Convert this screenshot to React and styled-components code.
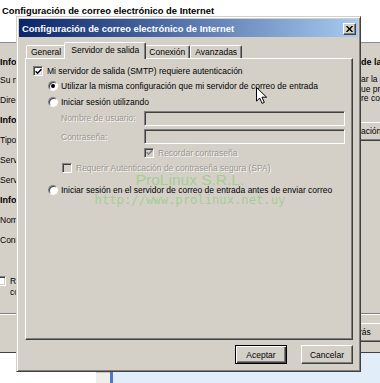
import React from 'react';
import styled, { createGlobalStyle, css } from 'styled-components';

const GlobalStyle = createGlobalStyle`
  html, body { margin: 0; padding: 0; background: #ffffff; }
  body {
    font-family: "Liberation Sans", Arial, sans-serif;
    font-size: 8.5px;
    color: #000;
  }
  * { box-sizing: border-box; }
`;

const Desktop = styled.div`
  position: relative;
  width: 380px;
  height: 383px;
  overflow: hidden;
  background: #fff;
`;

const MailPane = styled.div`
  position: absolute;
  left: 96px;
  top: 353px;
  right: 0;
  bottom: 0;
  display: flex;
`;
const PaneGutter = styled.div`
  width: 14px;
  margin-top: 19px;
  background: #efeee9;
  border-top: 1px solid #c9c7c0;
`;
const PaneBar = styled.div`
  width: 3px;
  background: #4f79c2;
`;
const PaneBody = styled.div`
  flex: 1;
  background: #e2edfa;
`;

const Wizard = styled.div`
  position: absolute;
  left: -3px;
  top: 0;
  width: 424px;
  height: 353px;
  display: flex;
  flex-direction: column;
`;
const WizardHeader = styled.div`
  height: 42px;
  background: #fff;
  padding: 5px 0 0 5px;
  font-size: 9.4px;
  font-weight: bold;
  line-height: 11px;
  white-space: nowrap;
`;
const WizardBody = styled.div`
  flex: 1;
  display: flex;
  flex-direction: column;
  background: #d4d0c8;
  border-top: 1px solid #8f8d88;
`;
const WizardMain = styled.div`
  flex: 1;
  display: flex;
`;
const LeftCol = styled.div`
  width: 364px;
  flex: none;
  padding: 11px 0 0 3px;
  display: flex;
  flex-direction: column;
  overflow: hidden;
`;
const FieldLabel = styled.div`
  height: ${p => p.$h ?? 20}px;
  line-height: ${p => p.$h ?? 20}px;
  font-size: ${p => (p.$bold ? '9px' : '8.5px')};
  font-weight: ${p => (p.$bold ? 'bold' : 'normal')};
  white-space: nowrap;
`;
const SideCheckRow = styled.div`
  display: flex;
  align-items: flex-start;
  gap: 4px;
  margin: 26px 0 0 -4px;
`;
const SideCheckText = styled.div`
  line-height: 11px;
  margin-top: -0.5px;
  white-space: nowrap;
`;
const RightCol = styled.div`
  flex: 1;
  padding-top: 13px;
  display: flex;
  flex-direction: column;
  white-space: nowrap;
  overflow: hidden;
`;
const SideHeading = styled.div`
  height: 12px;
  line-height: 12px;
  font-size: 9px;
  font-weight: bold;
`;
const SidePara = styled.div`
  margin-top: 7px;
  line-height: 9.5px;
`;
const SideButton = styled.div`
  margin-top: 18.5px;
  height: 19px;
  line-height: 17px;
  border-top: 1px solid #fff;
  border-bottom: 1px solid #404040;
  box-shadow: inset 0 -1px 0 #808080;
`;
const WizardFooter = styled.div`
  height: 40px;
  flex: none;
  display: flex;
  align-items: flex-start;
  border-top: 1px solid #808080;
  border-bottom: 1px solid #404040;
  box-shadow: inset 0 1px 0 #fff;
`;
const WizardButton = styled.div`
  margin: 9px 0 0 323px;
  width: 75px;
  height: 19px;
  line-height: 17px;
  text-align: center;
  background: #d4d0c8;
  border: 1px solid;
  border-color: #fff #404040 #404040 #fff;
  box-shadow: inset -1px -1px 0 #808080;
  white-space: nowrap;
`;

const Dialog = styled.div`
  position: absolute;
  left: 16px;
  top: 16px;
  width: 345px;
  height: 356px;
  background: #d4d0c8;
  border: 1px solid;
  border-color: #d4d0c8 #404040 #404040 #d4d0c8;
  box-shadow: inset 1px 1px 0 #fff, inset -1px -1px 0 #808080;
  padding: 2px;
  display: flex;
  flex-direction: column;
`;
const TitleBar = styled.div`
  height: 18px;
  flex: none;
  display: flex;
  align-items: center;
  justify-content: space-between;
  padding-left: 3px;
  background: linear-gradient(to right, #0a246a, #a6caf0);
`;
const TitleText = styled.span`
  color: #fff;
  font-size: 9.4px;
  font-weight: bold;
  white-space: nowrap;
`;
const CloseButton = styled.button`
  width: 13px;
  height: 12px;
  padding: 0;
  margin: 1px 2px 0 0;
  background: #d4d0c8;
  border: 1px solid;
  border-color: #fff #404040 #404040 #fff;
  box-shadow: inset -1px -1px 0 #808080;
  display: flex;
  align-items: center;
  justify-content: center;
`;
const TabStrip = styled.div`
  display: flex;
  align-items: flex-end;
  height: 16px;
  flex: none;
  margin: 5px 5px 0 6px;
  padding-left: 1px;
  position: relative;
  z-index: 1;
`;
const Tab = styled.div`
  height: ${p => (p.$active ? 17 : 13)}px;
  margin: 0 ${p => (p.$active ? -2 : 0)}px ${p => (p.$active ? -1 : 0)}px;
  padding: 0 ${p => (p.$active ? 6 : 4)}px ${p => (p.$active ? 2 : 0)}px;
  display: flex;
  align-items: center;
  background: #d4d0c8;
  border: 1px solid;
  border-bottom: none;
  border-color: #fff #404040 transparent #fff;
  border-radius: 2px 2px 0 0;
  box-shadow: inset -1px 0 0 #808080;
  white-space: nowrap;
  position: relative;
  z-index: ${p => (p.$active ? 2 : 1)};
`;
const TabPanel = styled.div`
  flex: 1;
  position: relative;
  margin: 0 5px 0 6px;
  background: #d4d0c8;
  border: 1px solid;
  border-color: #fff #404040 #404040 #fff;
  box-shadow: inset -1px -1px 0 #808080;
  padding: 4px 0 0 7px;
  display: flex;
  flex-direction: column;
`;
const OptionRow = styled.div`
  display: flex;
  align-items: center;
  height: ${p => p.$h}px;
  flex: none;
  margin-left: ${p => p.$indent || 0}px;
  margin-top: ${p => p.$mt || 0}px;
  gap: ${p => p.$gap ?? 4}px;
  color: ${p => (p.$disabled ? '#9a968f' : '#000')};
  text-shadow: ${p => (p.$disabled ? '1px 1px 0 rgba(255,255,255,0.85)' : 'none')};
  white-space: nowrap;
`;
const InputLabel = styled.span`
  width: 83px;
  flex: none;
`;
const TextInput = styled.input`
  width: 201px;
  height: 15px;
  padding: 0;
  margin: 0;
  appearance: none;
  background: #d4d0c8;
  border: 1px solid;
  border-color: #808080 #fff #fff #808080;
  box-shadow: inset 1px 1px 0 #404040, inset -1px -1px 0 #d4d0c8;
`;
const Box = styled.span`
  flex: none;
  width: 10px;
  height: 10px;
  display: inline-flex;
  align-items: center;
  justify-content: center;
  background: ${p => (p.$disabled ? '#d4d0c8' : '#fff')};
  border: 1px solid;
  border-color: #808080 #fff #fff #808080;
  box-shadow: inset 1px 1px 0 #404040, inset -1px -1px 0 #d4d0c8;
`;
const RadioRing = styled.span`
  flex: none;
  width: 10px;
  height: 10px;
  border-radius: 50%;
  background: #fff;
  border: 1px solid;
  border-color: #808080 #fff #fff #808080;
  box-shadow: inset 1px 1px 0 #404040;
  display: inline-flex;
  align-items: center;
  justify-content: center;
  &::after {
    content: '';
    width: 4px;
    height: 4px;
    border-radius: 50%;
    background: #000;
    display: ${p => (p.$on ? 'block' : 'none')};
  }
`;
const DialogFooter = styled.div`
  flex: none;
  display: flex;
  justify-content: flex-end;
  gap: 14px;
  padding: 5px 5px 5px 0;
`;
const PushButton = styled.button`
  width: 52px;
  height: 19px;
  padding: 0;
  font-family: inherit;
  font-size: 8.5px;
  color: #000;
  background: #d4d0c8;
  border: 1px solid;
  ${p =>
    p.$default
      ? css`
          border-color: #000;
          box-shadow: inset 1px 1px 0 #fff, inset -1px -1px 0 #404040, inset -2px -2px 0 #808080;
        `
      : css`
          border-color: #fff #404040 #404040 #fff;
          box-shadow: inset -1px -1px 0 #808080;
        `}
`;

/* watermark stamped over the tab page */
const Watermark = styled.div`
  position: absolute;
  left: -26px;
  top: 113px;
  width: 380px;
  display: flex;
  flex-direction: column;
  align-items: center;
  pointer-events: none;
  color: rgba(120, 205, 95, 0.55);
  white-space: nowrap;
`;
const WatermarkName = styled.span`
  display: block;
  font-family: "Liberation Sans", Arial, sans-serif;
  font-size: 15.5px;
  line-height: 16px;
  height: 16px;
`;
const WatermarkUrl = styled.span`
  display: block;
  margin-top: 6px;
  font-family: "DejaVu Sans Mono", monospace;
  font-size: 12.2px;
  line-height: 12px;
  height: 12px;
`;
const Cursor = styled.svg`
  position: absolute;
  left: 256px;
  top: 87px;
`;

function CheckBox({ checked, disabled }) {
  return (
    <Box $disabled={disabled}>
      {checked && (
        <svg width="7" height="7" viewBox="0 0 7 7">
          <path d="M0.6 3.2 L2.6 5.2 L6.4 1.2" stroke={disabled ? '#808080' : '#000'} strokeWidth="1.6" fill="none" />
        </svg>
      )}
    </Box>
  );
}

export default function App() {
  return (
    <>
      <GlobalStyle />
      <Desktop>
        <MailPane>
          <PaneGutter />
          <PaneBar />
          <PaneBody />
        </MailPane>

        <Wizard>
          <WizardHeader>Configuración de correo electrónico de Internet</WizardHeader>
          <WizardBody>
            <WizardMain>
              <LeftCol>
                <FieldLabel $bold $h={16}>Información sobre el usuario</FieldLabel>
                <FieldLabel>Su nombre:</FieldLabel>
                <FieldLabel>Dirección de correo electrónico:</FieldLabel>
                <FieldLabel $bold>Información del servidor</FieldLabel>
                <FieldLabel>Tipo de cuenta:</FieldLabel>
                <FieldLabel>Servidor de correo entrante:</FieldLabel>
                <FieldLabel>Servidor de correo saliente (SMTP):</FieldLabel>
                <FieldLabel $bold>Información de inicio de sesión</FieldLabel>
                <FieldLabel>Nombre de usuario:</FieldLabel>
                <FieldLabel>Contraseña:</FieldLabel>
                <SideCheckRow>
                  <CheckBox />
                  <SideCheckText>
                    Requerir inicio de sesión utilizando Autenticación de
                    <br />
                    contraseña segura (SPA)
                  </SideCheckText>
                </SideCheckRow>
              </LeftCol>
              <RightCol>
                <SideHeading>de la cuenta de prueba</SideHeading>
                <SidePara>
                  ar la información de esta pantalla, le
                  <br />
                  ue pruebe la cuenta haciendo clic en el
                  <br />
                  re conexión de red)
                </SidePara>
                <SideButton>ación de la cuenta...</SideButton>
              </RightCol>
            </WizardMain>
            <WizardFooter>
              <WizardButton>&lt; Atrás</WizardButton>
            </WizardFooter>
          </WizardBody>
        </Wizard>

        <Dialog>
          <TitleBar>
            <TitleText>Configuración de correo electrónico de Internet</TitleText>
            <CloseButton aria-label="Cerrar">
              <svg width="7" height="6" viewBox="0 0 7 6">
                <path d="M0.5 0 L6.5 6 M6.5 0 L0.5 6" stroke="#000" strokeWidth="1.4" />
              </svg>
            </CloseButton>
          </TitleBar>

          <TabStrip>
            <Tab>General</Tab>
            <Tab $active>Servidor de salida</Tab>
            <Tab>Conexión</Tab>
            <Tab>Avanzadas</Tab>
          </TabStrip>

          <TabPanel>
            <OptionRow $h={16}>
              <CheckBox checked />
              <span>Mi servidor de salida (SMTP) requiere autenticación</span>
            </OptionRow>
            <OptionRow $h={14} $indent={15} $gap={3}>
              <RadioRing $on />
              <span>Utilizar la misma configuración que mi servidor de correo de entrada</span>
            </OptionRow>
            <OptionRow $h={17} $indent={15} $gap={3}>
              <RadioRing />
              <span>Iniciar sesión utilizando</span>
            </OptionRow>
            <OptionRow $h={16} $indent={28} $gap={0} $disabled>
              <InputLabel>Nombre de usuario:</InputLabel>
              <TextInput disabled />
            </OptionRow>
            <OptionRow $h={17} $mt={2} $indent={28} $gap={0} $disabled>
              <InputLabel>Contraseña:</InputLabel>
              <TextInput type="password" disabled />
            </OptionRow>
            <OptionRow $h={15} $indent={111} $disabled>
              <CheckBox checked disabled />
              <span>Recordar contraseña</span>
            </OptionRow>
            <OptionRow $h={16} $indent={29} $disabled>
              <CheckBox disabled />
              <span>Requerir Autenticación de contraseña segura (SPA)</span>
            </OptionRow>
            <OptionRow $h={16} $mt={6} $indent={15} $gap={3}>
              <RadioRing />
              <span>Iniciar sesión en el servidor de correo de entrada antes de enviar correo</span>
            </OptionRow>

            <Watermark>
              <WatermarkName>ProLinux S.R.L.</WatermarkName>
              <WatermarkUrl>http://www.prolinux.net.uy</WatermarkUrl>
            </Watermark>
          </TabPanel>

          <DialogFooter>
            <PushButton $default>Aceptar</PushButton>
            <PushButton>Cancelar</PushButton>
          </DialogFooter>
        </Dialog>

        <Cursor width="12" height="18" viewBox="0 0 12 18">
          <path d="M0.5 0.5 V14.2 L3.7 11 L6.1 16.4 L8.3 15.4 L6 10.2 H10.6 Z" fill="#fff" stroke="#000" strokeWidth="1" strokeLinejoin="miter" />
        </Cursor>
      </Desktop>
    </>
  );
}
